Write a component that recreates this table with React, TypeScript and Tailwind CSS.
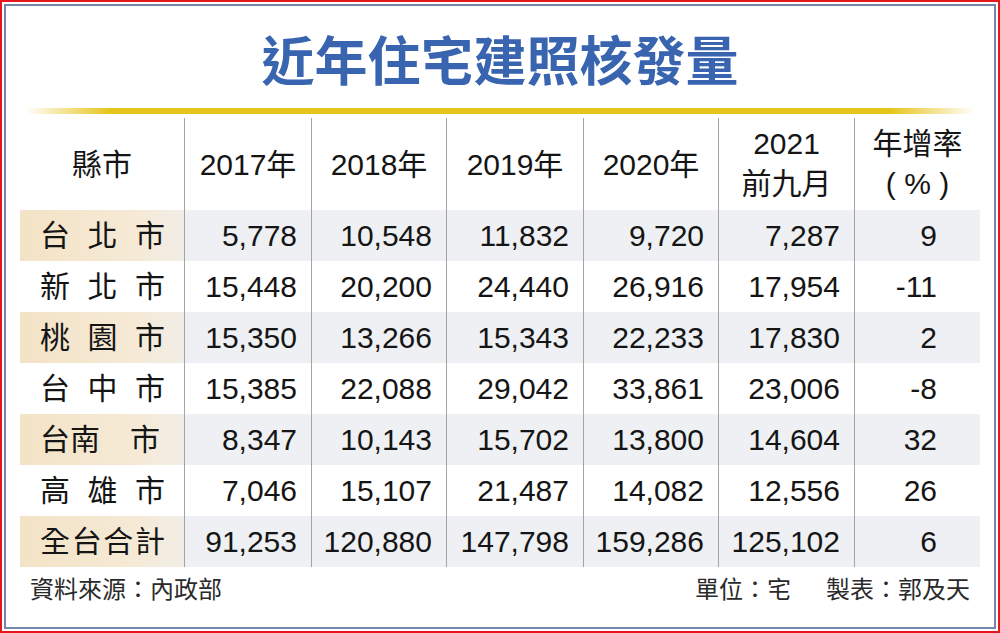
import React from "react";

type Row = {
  city: string[];
  values: string[];
  rate: string;
};

const rows: Row[] = [
  { city: ["台", "北", "市"], values: ["5,778", "10,548", "11,832", "9,720", "7,287"], rate: "9" },
  { city: ["新", "北", "市"], values: ["15,448", "20,200", "24,440", "26,916", "17,954"], rate: "-11" },
  { city: ["桃", "園", "市"], values: ["15,350", "13,266", "15,343", "22,233", "17,830"], rate: "2" },
  { city: ["台", "中", "市"], values: ["15,385", "22,088", "29,042", "33,861", "23,006"], rate: "-8" },
  { city: ["台南", "市"], values: ["8,347", "10,143", "15,702", "13,800", "14,604"], rate: "32" },
  { city: ["高", "雄", "市"], values: ["7,046", "15,107", "21,487", "14,082", "12,556"], rate: "26" },
  { city: ["全", "台", "合", "計"], values: ["91,253", "120,880", "147,798", "159,286", "125,102"], rate: "6" },
];

const years = ["2017年", "2018年", "2019年", "2020年"];

const font = "font-['Liberation_Sans','Noto_Sans_CJK_TC',sans-serif]";
const grid = "grid grid-cols-[164px_127px_135px_137px_135px_136px_126px]";
const line = "border-l border-[#a3a3a3]";

const App: React.FC = () => {
  return (
    <div className={`w-[1000px] h-[633px] border-2 border-[#e5161c] p-[2px] bg-white ${font}`}>
      <div className="h-full border-2 border-[#7787aa] bg-white flex flex-col">
        {/* ------------------ Title ------------------ */}
        <h1 className="mt-[26px] text-center text-[53px] leading-none font-bold text-[#3864b0] font-['Noto_Sans_CJK_TC',sans-serif]">
          近年住宅建照核發量
        </h1>

        <div className="mt-[23px] mx-[19px] h-[6px] bg-[linear-gradient(to_right,rgba(230,196,26,0)_0%,#e6c41a_9%,#e6c41a_91%,rgba(230,196,26,0)_100%)]" />

        {/* ------------------ Table ------------------ */}
        <div className="mt-[4px] mx-[14px] text-[30px] text-[#151515]">
          <div className={`${grid} h-[92px]`}>
            <div className="flex items-center justify-center">縣市</div>
            {years.map((y) => (
              <div key={y} className={`${line} flex items-center justify-center`}>
                {y}
              </div>
            ))}
            <div className={`${line} flex flex-col items-center justify-center leading-[40px]`}>
              <span>2021</span>
              <span>前九月</span>
            </div>
            <div className={`${line} flex flex-col items-center justify-center leading-[40px]`}>
              <span>年增率</span>
              <span className="whitespace-pre">( % )</span>
            </div>
          </div>

          {rows.map((r, i) => {
            const band = i % 2 === 0;
            return (
              <div key={i} className={`${grid} h-[51px] leading-none`}>
                <div
                  className={`flex items-center justify-between pl-[20px] ${
                    r.city.length === 2 ? "pr-[24px]" : "pr-[19px]"
                  } ${band ? "bg-[linear-gradient(to_right,#f3e3c6,#f6ead6_70%,#f1ede6)]" : ""}`}
                >
                  {r.city.map((c, j) => (
                    <span key={j}>{c}</span>
                  ))}
                </div>
                {r.values.map((v, j) => (
                  <div
                    key={j}
                    className={`${line} flex items-center justify-end pr-[14px] ${band ? "bg-[#eef0f3]" : ""}`}
                  >
                    {v}
                  </div>
                ))}
                <div className={`${line} flex items-center justify-end pr-[43px] ${band ? "bg-[#eef0f3]" : ""}`}>
                  {r.rate}
                </div>
              </div>
            );
          })}
        </div>

        {/* ------------------ Footer ------------------ */}
        <div className="mt-[9px] mx-[24px] flex justify-between text-[24px] leading-none text-[#2a2a2a] font-['Noto_Sans_CJK_TC',sans-serif]">
          <span>資料來源：內政部</span>
          <span>
            單位：宅<span className="inline-block w-[35px]" />製表：郭及天
          </span>
        </div>
      </div>
    </div>
  );
};

export default App;
